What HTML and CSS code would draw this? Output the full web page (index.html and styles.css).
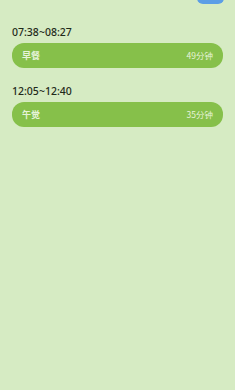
FILE: index.html
```html
<!DOCTYPE html>
<html>
<head>
<meta charset="utf-8">
<link rel="stylesheet" href="styles.css">
</head>
<body>
<div class="page">
  <div class="topbar"><div class="pill"></div></div>
  <div class="list">
    <div class="item">
      <div class="time">07:38~08:27</div>
      <div class="bar"><span class="name">早餐</span><span class="dur">49分钟</span></div>
    </div>
    <div class="item">
      <div class="time">12:05~12:40</div>
      <div class="bar"><span class="name">午觉</span><span class="dur">35分钟</span></div>
    </div>
  </div>
</div>
</body>
</html>
```
FILE: styles.css
```css
html, body {
  margin: 0;
  padding: 0;
  background: #d6ebc3;
}
.page {
  width: 235px;
  height: 390px;
  background: #d6ebc3;
  font-family: "Noto Sans", "Noto Sans CJK SC", sans-serif;
  overflow: hidden;
}
.topbar {
  height: 4px;
  display: flex;
  justify-content: flex-end;
  padding-right: 11px;
}
.pill {
  width: 27px;
  height: 12px;
  margin-top: -8px;
  border-radius: 6px;
  background: #5c9ee6;
}
.list {
  padding: 0 12px 0 12px;
  display: flex;
  flex-direction: column;
  gap: 16px;
  margin-top: 21px;
}
.item {
  display: flex;
  flex-direction: column;
  gap: 4px;
}
.time {
  font-size: 10.5px;
  line-height: 14px;
  color: #1f2a1a;
  font-weight: 500;
}
.bar {
  height: 25px;
  border-radius: 12px;
  background: #86c04a;
  display: flex;
  align-items: center;
  justify-content: space-between;
  padding: 0 10px 0 10px;
  color: #e6f3d8;
}
.name {
  font-weight: 700;
  font-size: 9px;
  line-height: 12px;
  font-family: "Noto Sans CJK SC", sans-serif;
}
.dur {
  font-size: 8.5px;
  line-height: 12px;
  margin-bottom: 2px;
  font-family: "Noto Sans CJK SC", sans-serif;
}
```
